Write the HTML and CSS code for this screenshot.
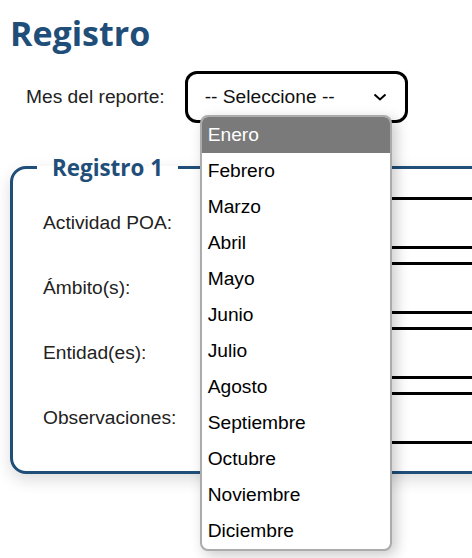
FILE: index.html
```html
<!DOCTYPE html>
<html lang="es">
<head>
    <meta charset="UTF-8">
    <title>Registro</title>
    <link rel="stylesheet" href="styles.css">
</head>
<body>
<div class="page">
    <h1 class="title">Registro</h1>

    <div class="month-row">
        <label class="field-label" for="mes">Mes del reporte:</label>
        <div class="select-wrap">
            <div class="select-box" id="mes">
                <span>-- Seleccione --</span>
                <svg class="chevron" width="14" height="8" viewBox="0 0 14 8">
                    <polyline points="1.5,1.5 7,6.5 12.5,1.5" fill="none" stroke="#000" stroke-width="2"/>
                </svg>
            </div>
            <ul class="dropdown">
                <li class="active">Enero</li>
                <li>Febrero</li>
                <li>Marzo</li>
                <li>Abril</li>
                <li>Mayo</li>
                <li>Junio</li>
                <li>Julio</li>
                <li>Agosto</li>
                <li>Septiembre</li>
                <li>Octubre</li>
                <li>Noviembre</li>
                <li>Diciembre</li>
            </ul>
        </div>
    </div>

    <fieldset class="registro">
        <legend>Registro 1</legend>
        <div class="form-row">
            <label class="field-label">Actividad POA:</label>
            <div class="input"></div>
        </div>
        <div class="form-row">
            <label class="field-label">Ámbito(s):</label>
            <div class="input"></div>
        </div>
        <div class="form-row">
            <label class="field-label">Entidad(es):</label>
            <div class="input"></div>
        </div>
        <div class="form-row">
            <label class="field-label">Observaciones:</label>
            <div class="input"></div>
        </div>
    </fieldset>
</div>
</body>
</html>
```

FILE: styles.css
```css
body { margin: 0; background: #fff; font-family: "Liberation Sans", Arial, sans-serif; color: #222; }
.page { padding: 10px 0 0 10px; overflow-x: clip; min-height: 548px; }

.title { margin: 0; font-family: "Open Sans", sans-serif; font-weight: 700; font-size: 34px; color: #1f4e79; line-height: 46px; }

.field-label { font-size: 19.2px; color: #222; }

.month-row { display: flex; align-items: center; gap: 20px; margin-top: 15px; padding-left: 16px; }
.select-wrap { position: relative; }
.select-box {
    width: 223px; height: 52px; box-sizing: border-box;
    border: 3px solid #000; border-radius: 12px;
    display: flex; align-items: center; justify-content: space-between;
    padding: 0 18px 0 17px; font-size: 19.2px; color: #111;
}
.chevron { display: block; }

.dropdown {
    position: absolute; left: 15px; top: 44px; z-index: 5;
    width: 192px; box-sizing: border-box;
    margin: 0; padding: 0; list-style: none;
    background: #fff; border: 2px solid #ababab; border-radius: 8px;
    box-shadow: 4px 4px 14px rgba(0, 0, 0, 0.22);
    overflow: hidden;
}
.dropdown li { height: 36px; line-height: 36px; padding-left: 6px; font-size: 19.2px; color: #000; }
.dropdown li.active { background: #7a7a7a; color: #fff; }

.registro {
    width: 700px; box-sizing: border-box; margin: 29px 0 0;
    border: 3px solid #1f4e79; border-radius: 16px;
    padding: 14px 0 27px 30px;
    box-shadow: 0 6px 16px rgba(0, 0, 0, 0.14);
}
.registro legend {
    margin-left: -6px; padding: 0 15px;
    font-family: "Open Sans", sans-serif; font-weight: 700; font-size: 22.4px; color: #1f4e79;
}
.form-row { display: grid; grid-template-columns: 167px 1fr; align-items: center; margin-bottom: 13px; }
.form-row:last-child { margin-bottom: 0; }
.input { height: 52px; box-sizing: border-box; border: 3px solid #000; border-radius: 10px; }
```
